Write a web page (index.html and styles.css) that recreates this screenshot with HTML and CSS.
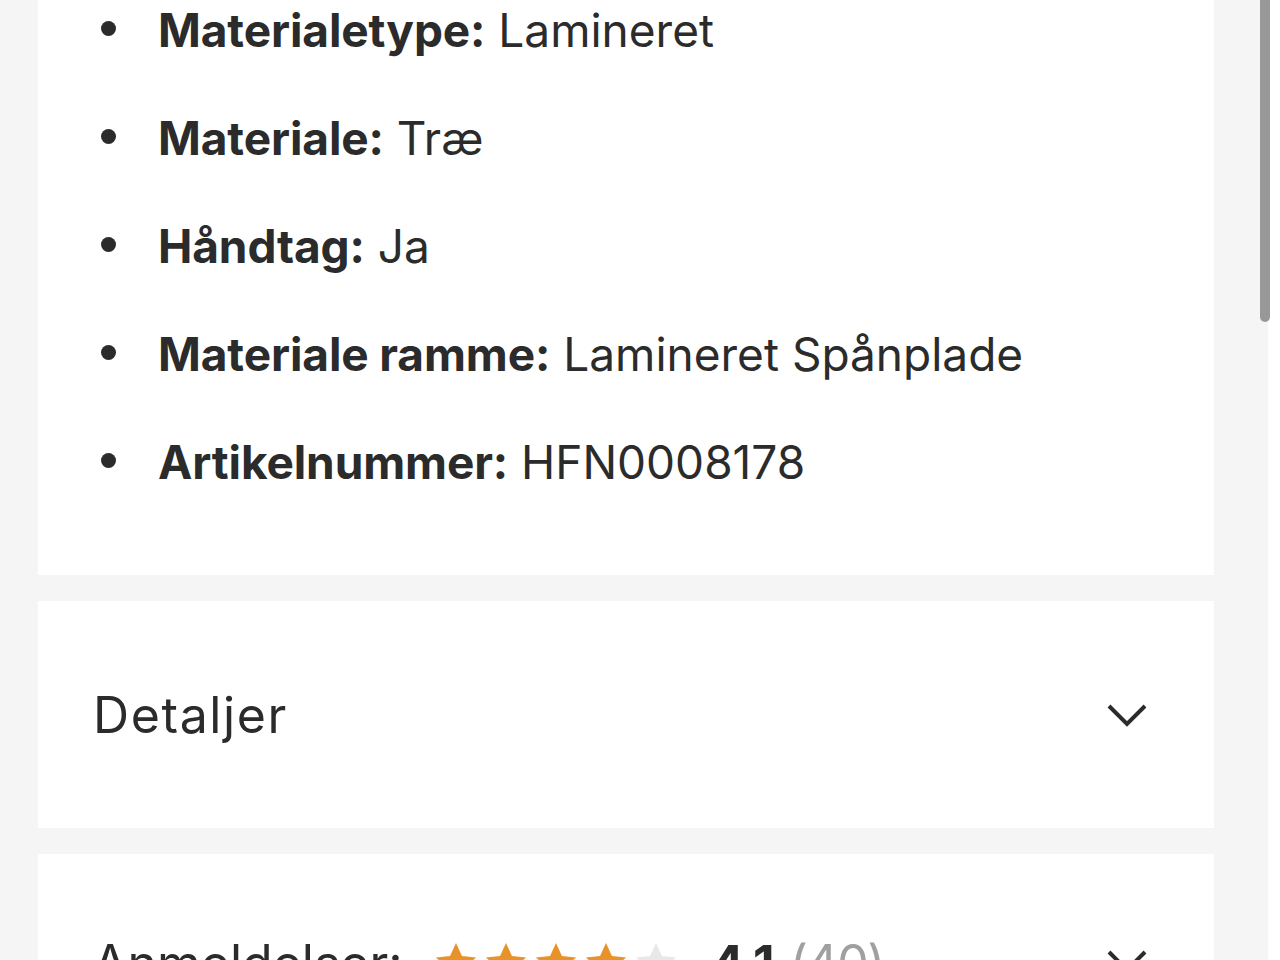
FILE: index.html
```html
<!DOCTYPE html>
<html lang="da">

<head>
    <meta charset="UTF-8">
    <meta name="viewport" content="width=device-width, initial-scale=1.0">
    <title>Produkt</title>
    <link rel="stylesheet" href="styles.css">
</head>
<body>
    <div class="page">
        <div class="card specs">
            <ul class="spec-list">
                <li><b>Materialetype:</b> Lamineret</li>
                <li><b>Materiale:</b> Træ</li>
                <li><b>Håndtag:</b> Ja</li>
                <li><b>Materiale ramme:</b> Lamineret Spånplade</li>
                <li><b>Artikelnummer:</b> HFN0008178</li>
            </ul>
        </div>

        <div class="card section">
            <span class="section-title details">Detaljer</span>
            <svg class="chevron" width="46" height="28" viewBox="0 0 46 28">
                <path d="M5 5 L23 23 L41 5" />
            </svg>
        </div>

        <div class="card section reviews">
            <div class="review-head">
                <span class="section-title">Anmeldelser:</span>
                <div class="stars">
                    <svg class="star" viewBox="0 0 24 24"><path d="M12 1.5l3.1 6.9 7.4.7-5.6 5 1.6 7.4L12 17.6l-6.5 3.9 1.6-7.4-5.6-5 7.4-.7z" /></svg>
                    <svg class="star" viewBox="0 0 24 24"><path d="M12 1.5l3.1 6.9 7.4.7-5.6 5 1.6 7.4L12 17.6l-6.5 3.9 1.6-7.4-5.6-5 7.4-.7z" /></svg>
                    <svg class="star" viewBox="0 0 24 24"><path d="M12 1.5l3.1 6.9 7.4.7-5.6 5 1.6 7.4L12 17.6l-6.5 3.9 1.6-7.4-5.6-5 7.4-.7z" /></svg>
                    <svg class="star" viewBox="0 0 24 24"><path d="M12 1.5l3.1 6.9 7.4.7-5.6 5 1.6 7.4L12 17.6l-6.5 3.9 1.6-7.4-5.6-5 7.4-.7z" /></svg>
                    <svg class="star empty" viewBox="0 0 24 24"><path d="M12 1.5l3.1 6.9 7.4.7-5.6 5 1.6 7.4L12 17.6l-6.5 3.9 1.6-7.4-5.6-5 7.4-.7z" /></svg>
                </div>
                <span class="score">4.1</span>
                <span class="count">(40)</span>
            </div>
            <svg class="chevron" width="46" height="28" viewBox="0 0 46 28">
                <path d="M5 5 L23 23 L41 5" />
            </svg>
        </div>
    </div>

    <div class="scroll-thumb"></div>
</body>

</html>
```

FILE: styles.css
```css
body {
    margin: 0;
    padding: 0;
    background-color: #fff;
    font-family: Inter, "Noto Sans", sans-serif;
    color: #2b2b2b;
    overflow: hidden;
    height: 960px;
}

.page {
    width: 1268px;
    box-sizing: border-box;
    min-height: 960px;
    background-color: #f5f5f5;
    padding: 0 54px 0 38px;
}

.card {
    background-color: #fff;
    margin-bottom: 26px;
}

.specs {
    margin-top: -24px;
    padding-bottom: 59px;
}

.spec-list {
    list-style: none;
    margin: 0;
    padding: 0 0 0 63px;
}

.spec-list li {
    display: flex;
    align-items: center;
    height: 108px;
    font-size: 46px;
    white-space: pre;
}

.spec-list li::before {
    content: "";
    width: 15px;
    height: 15px;
    border-radius: 50%;
    background-color: #2b2b2b;
    margin-right: 42px;
    margin-bottom: 4px;
    flex-shrink: 0;
}

.spec-list b {
    font-weight: 700;
    letter-spacing: -0.1px;
}

.section {
    display: flex;
    align-items: center;
    justify-content: space-between;
    height: 227px;
    padding: 0 64px 0 55px;
}

.section-title {
    font-size: 50px;
    font-weight: 400;
}

.details {
    letter-spacing: 1.6px;
}

.chevron path {
    fill: none;
    stroke: #2b2b2b;
    stroke-width: 4;
}

.reviews {
    align-items: flex-start;
    height: 300px;
    padding-top: 79px;
    box-sizing: border-box;
}

.review-head {
    display: flex;
    align-items: center;
}

.stars {
    display: flex;
    gap: 4px;
    margin-left: 30px;
}

.star {
    width: 46px;
    height: 46px;
    fill: #e8922a;
}

.star.empty {
    fill: #e8e8e8;
}

.score {
    font-size: 50px;
    font-weight: 700;
    margin-left: 32px;
    letter-spacing: -1px;
}

.count {
    font-size: 50px;
    color: #a0a0a0;
    margin-left: 16px;
    letter-spacing: -1.5px;
}

.reviews .chevron {
    margin-top: 14px;
}

.scroll-thumb {
    position: fixed;
    top: 0;
    right: 10px;
    width: 10px;
    height: 322px;
    border-radius: 0 0 5px 5px;
    background-color: #989898;
}
```
